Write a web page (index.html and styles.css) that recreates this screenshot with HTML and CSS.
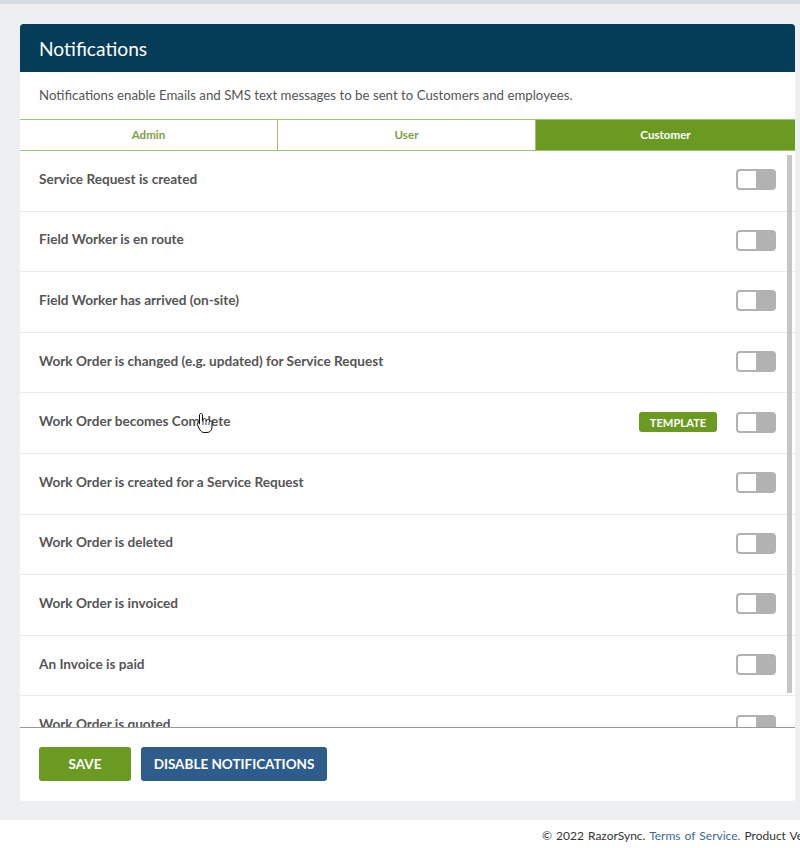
FILE: index.html
```html
<!DOCTYPE html>
<html lang="en">
<head>
<meta charset="utf-8">
<title>Notifications</title>
<link rel="stylesheet" href="styles.css">
</head>
<body>
<div class="topstrip"></div>
<div class="page">
  <div class="card">
    <div class="card-header">Notifications</div>
    <p class="desc">Notifications enable Emails and SMS text messages to be sent to Customers and employees.</p>
    <div class="tabs">
      <div class="tab">Admin</div>
      <div class="tab">User</div>
      <div class="tab active">Customer</div>
    </div>
    <div class="list-wrap">
      <div class="list">
        <div class="row"><span class="label">Service Request is created</span><span class="toggle"></span></div>
        <div class="row"><span class="label">Field Worker is en route</span><span class="toggle"></span></div>
        <div class="row"><span class="label">Field Worker has arrived (on-site)</span><span class="toggle"></span></div>
        <div class="row"><span class="label">Work Order is changed (e.g. updated) for Service Request</span><span class="toggle"></span></div>
        <div class="row"><span class="label">Work Order becomes Complete</span><span class="badge">TEMPLATE</span><span class="toggle"></span>
          <svg class="cursor" width="17" height="22" viewBox="0 0 17 22"><path d="M5 1.5c.8 0 1.5.7 1.5 1.5v6h.5V8c0-.8.7-1.5 1.5-1.5S10 7.2 10 8v1h.5c0-.8.7-1.5 1.5-1.5s1.5.7 1.5 1.5v1c0-.7.6-1.2 1.2-1.2.7 0 1.3.6 1.3 1.2v5c0 3.2-2 5.5-5 5.5H8c-2 0-3-1-4-2.5L1.5 13c-.5-.8-.2-1.6.5-2s1.5 0 2 .6l-.5.4V3c0-.8.7-1.5 1.5-1.5z" fill="#fff" stroke="#111" stroke-width="1"/><path d="M7 9v4M10 9v4M13 10v3" stroke="#111" stroke-width=".8"/></svg>
        </div>
        <div class="row"><span class="label">Work Order is created for a Service Request</span><span class="toggle"></span></div>
        <div class="row"><span class="label">Work Order is deleted</span><span class="toggle"></span></div>
        <div class="row"><span class="label">Work Order is invoiced</span><span class="toggle"></span></div>
        <div class="row"><span class="label">An Invoice is paid</span><span class="toggle"></span></div>
        <div class="row"><span class="label">Work Order is quoted</span><span class="toggle"></span></div>
      </div>
      <div class="scroll-thumb"></div>
    </div>
    <div class="actions">
      <button class="btn btn-save">SAVE</button>
      <button class="btn btn-disable">DISABLE NOTIFICATIONS</button>
    </div>
  </div>
</div>
<footer class="footer">© 2022 RazorSync. <a href="#" class="link">Terms of Service.</a> Product Version 8.1.0</footer>
</body>
</html>
```

FILE: styles.css
```css
* { box-sizing: border-box; }
html, body { margin: 0; padding: 0; }
body {
  width: 800px;
  height: 848px;
  overflow: hidden;
  font-family: Lato, "Open Sans", sans-serif;
  background: #ffffff;
  color: #555;
}
.topstrip {
  height: 4px;
  background: #d6dce1;
}
.page {
  background: #eeeff1;
  padding: 20px 5px 19px 20px;
}
.card {
  background: #fff;
  border-radius: 3px;
  overflow: hidden;
}
.card-header {
  height: 48px;
  background: #053c57;
  color: #fff;
  font-size: 19.2px;
  line-height: 50px;
  padding-left: 19px;
  border-radius: 3px 3px 0 0;
}
.desc {
  margin: 0;
  height: 47px;
  padding: 15px 19px 0;
  font-size: 13.25px;
  line-height: 16px;
  color: #555;
}
.tabs {
  display: grid;
  grid-template-columns: 258px 258px 1fr;
  height: 32px;
  border-top: 1px solid #a3bf74;
  border-bottom: 1px solid #a3bf74;
}
.tab {
  display: flex;
  align-items: center;
  justify-content: center;
  padding-bottom: 1px;
  font-size: 11.6px;
  font-weight: 700;
  color: #7f9f45;
  border-right: 1px solid #a3bf74;
}
.tab.active {
  background: #6b9a22;
  color: #fff;
  border-right: none;
}
.list-wrap {
  position: relative;
}
.list {
  height: 576px;
  overflow: hidden;
}
.scroll-thumb {
  position: absolute;
  right: 3px;
  top: 4px;
  width: 5px;
  height: 538px;
  background: #c6c6c6;
}
.row {
  position: relative;
  height: 60.6px;
  display: flex;
  align-items: center;
  padding: 0 19px 2px 19px;
  border-bottom: 1px solid #ebebeb;
}
.label {
  flex: 1;
  font-size: 13.6px;
  font-weight: 700;
  color: #555;
  margin-bottom: 2px;
}
.badge {
  background: #6b9a22;
  color: #fff;
  font-size: 11.2px;
  font-weight: 700;
  height: 20px;
  width: 78px;
  display: flex;
  align-items: center;
  justify-content: center;
  border-radius: 3px;
  margin-right: 19px;
}
.toggle {
  width: 40px;
  height: 21px;
  border: 2px solid #b2b2b2;
  border-radius: 4px;
  background: linear-gradient(to right, #fff 0, #fff 50%, #b2b2b2 50%, #b2b2b2 100%);
}
.cursor {
  position: absolute;
  left: 176px;
  top: 19px;
}
.actions {
  border-top: 1px solid #9a9a9a;
  padding: 19px 19px 20px;
  display: flex;
  gap: 10px;
}
.btn {
  height: 34px;
  border: none;
  border-radius: 3px;
  color: #fff;
  font-family: Lato, "Open Sans", sans-serif;
  font-size: 13.5px;
  font-weight: 700;
  padding: 0;
}
.btn-save { width: 92px; background: #6b9a22; }
.btn-disable { width: 186px; background: #2e5c8b; }
.footer {
  height: 28px;
  padding-left: 542px;
  font-size: 12px;
  line-height: 32px;
  color: #333;
  white-space: nowrap;
  overflow: hidden;
  word-spacing: 1px;
}
.link { color: #3c6896; text-decoration: none; }
```
